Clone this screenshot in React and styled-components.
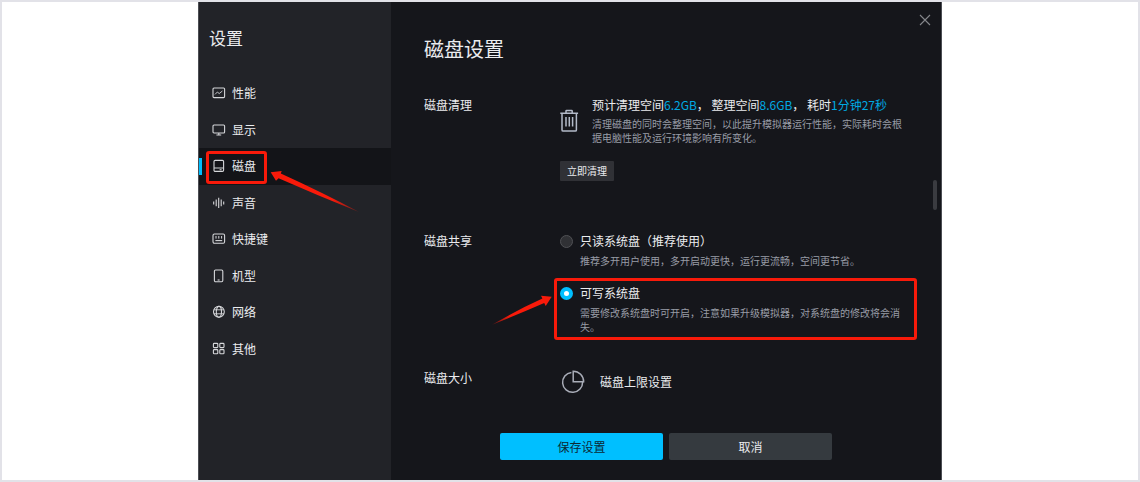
import React, { useState } from 'react';
import styled, { createGlobalStyle } from 'styled-components'

const GlobalStyle = createGlobalStyle`
	* {
		box-sizing: border-box;
	}
	body {
		margin: 0;
		background: #fff;
		font-family: "Noto Sans CJK SC", sans-serif;
		font-size: 12px;
		line-height: 16px;
	}
	button {
		border: 0;
		padding: 0;
		font: inherit;
		cursor: pointer;
	}
	svg {
		display: block;
		flex: none;
	}
`

const Page = styled.div`
	display: flex;
	justify-content: center;
	min-height: 100vh;
	border: 2px solid #e2e2e8;
`

const Dialog = styled.div`
	display: flex;
	width: 100%;
	max-width: 744px;
	border: solid #4b4d53;
	border-width: 0 1px;
	background: #15161b;
	color: #ebecef;
`

const Sidebar = styled.nav`
	flex: none;
	width: 192px;
	padding-top: 24px;
	background: #222328;
`

const SidebarTitle = styled.h1`
	margin: 0 0 25px;
	padding-left: 10px;
	font-size: 17px;
	font-weight: normal;
	line-height: 24px;
`

const NavList = styled.ul`
	display: grid;
	grid-auto-rows: 1fr;
	height: 292px;
	margin: 0;
	padding: 0;
	list-style: none;
`

const NavItem = styled.li`
	position: relative;
	display: flex;
	background: ${props => props.$active ? '#131418' : 'none'};
`

const NavButton = styled.button`
	display: flex;
	align-items: center;
	gap: 6px;
	width: 100%;
	padding-left: 13px;
	background: none;
	color: #ebecef;
`

const ActiveBar = styled.span`
	position: absolute;
	left: 0;
	top: 10px;
	width: 3px;
	height: 17px;
	background: #00bfff;
`

const Main = styled.main`
	display: flex;
	flex-direction: column;
	flex: 1;
	min-width: 0;
	position: relative;
`

const TopBar = styled.div`
	display: flex;
	align-items: center;
	justify-content: flex-end;
	height: 35px;
	padding-right: 10px;
`

const CloseButton = styled.button`
	background: none;
	color: #85878c;
`

const Body = styled.div`
	display: flex;
	flex-direction: column;
	gap: 36px;
	padding: 0 35px 0 33px;
`

const Title = styled.h2`
	margin: 0;
	font-size: 20px;
	font-weight: normal;
	line-height: 24px;
`

const Section = styled.section`
	display: grid;
	grid-template-columns: 136px 1fr;
	padding-bottom: ${props => props.$spaced ? '16px' : '0'};
`

const SectionLabel = styled.h3`
	margin: 0;
	font-size: 12px;
	font-weight: normal;
`

const IconRow = styled.div`
	display: flex;
	align-items: center;
	gap: 12px;
`

const Summary = styled.p`
	margin: 0 0 4px;
	white-space: pre-wrap;
`

const Value = styled.span`
	color: #00a9e2;
`

const Hint = styled.p`
	margin: 0;
	color: #989ca6;
	font-size: 10px;
	line-height: 14px;
`

const SmallButton = styled.button`
	height: 20px;
	margin-top: 16px;
	padding: 0 7px;
	border-radius: 1px;
	background: #303136;
	color: #ebecef;
	font-size: 10px;
	line-height: 14px;
`

const Options = styled.div`
	display: flex;
	flex-direction: column;
	gap: 17px;
`

const Option = styled.div`
	position: relative;
`

const OptionLabel = styled.label`
	display: flex;
	align-items: center;
	gap: 7px;
	margin-bottom: 5px;
`

const Radio = styled.input`
	appearance: none;
	width: 13px;
	height: 13px;
	margin: 0;
	border: 1px solid #505155;
	border-radius: 50%;
	background: #303135;

	&:checked {
		border: 4px solid #00bfff;
		background: #fff;
	}
`

const OptionHint = styled(Hint)`
	padding-left: 20px;
`

const Footer = styled.div`
	display: flex;
	justify-content: center;
	gap: 6px;
	margin-top: auto;
	padding: 20px 0;
`

const FooterButton = styled.button`
	width: 163px;
	height: 27px;
	border-radius: 2px;
	background: ${props => props.$primary ? '#00bfff' : '#353a3f'};
	color: ${props => props.$primary ? '#0c2935' : '#ebecef'};
`

const ScrollThumb = styled.div`
	position: absolute;
	right: 4px;
	top: 178px;
	width: 4px;
	height: 30px;
	border-radius: 2px;
	background: #3a3b40;
`

/* red marks laid over the dialog */

const Mark = styled.span`
	position: absolute;
	z-index: 1;
	inset: ${props => props.$inset};
	border: 3px solid #f81a0a;
	border-radius: 3px;
	pointer-events: none;
`

const Arrow = styled.svg`
	position: absolute;
	z-index: 1;
	left: ${props => props.$left};
	top: ${props => props.$top};
	pointer-events: none;
`

const NavIcon = ({ children }) => (
	<svg width="14" height="14" viewBox="0 0 14 14" fill="none" stroke="#d6d7da" strokeWidth="1.1">
		{children}
	</svg>
)

const navItems = [
	{ name: '性能', icon: <><rect x="1" y="2" width="11.6" height="9.6" rx="1" /><path d="M3 8.4 5.4 6l1.8 1.6L10.4 5" strokeWidth="0.9" /></> },
	{ name: '显示', icon: <><rect x="1" y="2" width="11.6" height="8" rx="1" /><path d="M6.8 10v1.8M4.4 12h4.8" /></> },
	{ name: '磁盘', icon: <><rect x="2" y="1.4" width="9.6" height="11" rx="1.2" /><path d="M2 9h9.6M7.6 10.8h2" /></> },
	{ name: '声音', icon: <path d="M1.7 5.4v3M4.2 3.6v6.6M6.7 1.8v10.2M9.2 3.6v6.6M11.7 5.4v3" /> },
	{ name: '快捷键', icon: <><rect x="1" y="2" width="11.6" height="9.2" rx="1.4" /><path d="M4 4v2.6M6.8 4v2.6M9.6 4v2.6" strokeWidth="1" /><path d="M3.4 8.6h6.8" /></> },
	{ name: '机型', icon: <><rect x="2.4" y="1" width="8.4" height="11.8" rx="1.2" /><path d="M5.6 11h2" /></> },
	{ name: '网络', icon: <><circle cx="6.9" cy="6.8" r="5.4" /><ellipse cx="6.9" cy="6.8" rx="2.6" ry="5.4" /><path d="M2 4.8h9.8M2 8.8h9.8" strokeWidth="0.9" /></> },
	{ name: '其他', icon: <><rect x="1.4" y="1.4" width="4.4" height="4.2" rx="0.8" /><rect x="7.8" y="1.4" width="4.2" height="4.2" rx="0.8" /><rect x="1.4" y="7.6" width="4.4" height="4.2" rx="0.8" /><rect x="7.8" y="7.6" width="4.2" height="4.2" rx="0.8" /></> },
]

const TrashIcon = () => (
	<svg width="20" height="24" viewBox="0 0 20 24" fill="none" stroke="#b3bac9" strokeWidth="1.5">
		<path d="M0.3 4.2h17.8M6 4V2q0-.6.6-.6h5q.6 0 .6.6v2" />
		<path d="M2 4.4V21q0 1.1 1.1 1.1h12.2q1.1 0 1.1-1.1V4.4" />
		<path d="M6 8v9.6M9.3 8v9.6M12.6 8v9.6" />
	</svg>
)

const PieIcon = () => (
	<svg width="28" height="24" viewBox="0 0 28 24" fill="none" stroke="#a9adb8" strokeWidth="1.5">
		<path d="M11.4 2.4A10 10 0 1 0 22.6 12" />
		<path d="M13.2 1.2v10.6h10.4A10.4 10.4 0 0 0 13.2 1.2z" />
	</svg>
)

const CloseIcon = () => (
	<svg width="12" height="12" viewBox="0 0 12 12" stroke="currentColor" strokeWidth="1.1">
		<path d="M1 1l10 10M11 1L1 11" />
	</svg>
)

const NavArrow = () => (
	<Arrow $left="71px" $top="22px" width="92" height="44" viewBox="0 0 92 44">
		<defs>
			<linearGradient id="navArrow">
				<stop offset="0.7" stopColor="#f81a0a" />
				<stop offset="1" stopColor="#f81a0a" stopOpacity="0.3" />
			</linearGradient>
		</defs>
		<path d="M0.7 2.3 11.7 1 10.8 3.6Q52 22.4 89 42Q48 25.6 8.6 8.2L6 10.8Z" fill="url(#navArrow)" />
	</Arrow>
)

const OptionArrow = () => (
	<Arrow $left="-70px" $top="8px" width="64" height="34" viewBox="0 0 64 34">
		<defs>
			<linearGradient id="optionArrow">
				<stop offset="0" stopColor="#f81a0a" stopOpacity="0.3" />
				<stop offset="0.3" stopColor="#f81a0a" />
			</linearGradient>
		</defs>
		<path d="M61.7 3.7 51 2.8 52.4 5.6Q26 17.6 2 31.8Q28 21.4 54.2 10L55.7 12.9Z" fill="url(#optionArrow)" />
	</Arrow>
)

const App = () => {
	const [mode, setMode] = useState('write')

	return (
		<Page>
			<GlobalStyle />
			<Dialog>
				<Sidebar>
					<SidebarTitle>设置</SidebarTitle>
					<NavList>
						{navItems.map(({ name, icon }) => (
							<NavItem key={name} $active={name === '磁盘'}>
								<NavButton type="button">
									<NavIcon>{icon}</NavIcon>
									{name}
								</NavButton>
								{name === '磁盘' && (
									<>
										<ActiveBar />
										<Mark $inset="3px 124px 1px 7px" />
										<NavArrow />
									</>
								)}
							</NavItem>
						))}
					</NavList>
				</Sidebar>

				<Main>
					<TopBar>
						<CloseButton type="button" aria-label="关闭"><CloseIcon /></CloseButton>
					</TopBar>

					<Body>
						<Title>磁盘设置</Title>

						<Section $spaced>
							<SectionLabel>磁盘清理</SectionLabel>
							<div>
								<IconRow>
									<TrashIcon />
									<div>
										<Summary>
											预计清理空间<Value>6.2GB</Value>， 整理空间<Value>8.6GB</Value>， 耗时<Value>1分钟27秒</Value>
										</Summary>
										<Hint>清理磁盘的同时会整理空间，以此提升模拟器运行性能，实际耗时会根据电脑性能及运行环境影响有所变化。</Hint>
									</div>
								</IconRow>
								<SmallButton type="button">立即清理</SmallButton>
							</div>
						</Section>

						<Section>
							<SectionLabel>磁盘共享</SectionLabel>
							<Options>
								<Option>
									<OptionLabel>
										<Radio type="radio" name="mode" checked={mode === 'read'} onChange={() => setMode('read')} />
										只读系统盘（推荐使用）
									</OptionLabel>
									<OptionHint>推荐多开用户使用，多开启动更快，运行更流畅，空间更节省。</OptionHint>
								</Option>
								<Option>
									<OptionLabel>
										<Radio type="radio" name="mode" checked={mode === 'write'} onChange={() => setMode('write')} />
										可写系统盘
									</OptionLabel>
									<OptionHint>需要修改系统盘时可开启，注意如果升级模拟器，对系统盘的修改将会消失。</OptionHint>
									<Mark $inset="-7px -11px -6px -6px" />
									<OptionArrow />
								</Option>
							</Options>
						</Section>

						<Section>
							<SectionLabel>磁盘大小</SectionLabel>
							<IconRow>
								<PieIcon />
								磁盘上限设置
							</IconRow>
						</Section>
					</Body>

					<Footer>
						<FooterButton type="button" $primary>保存设置</FooterButton>
						<FooterButton type="button">取消</FooterButton>
					</Footer>
					<ScrollThumb />
				</Main>
			</Dialog>
		</Page>
	)
}

export default App
